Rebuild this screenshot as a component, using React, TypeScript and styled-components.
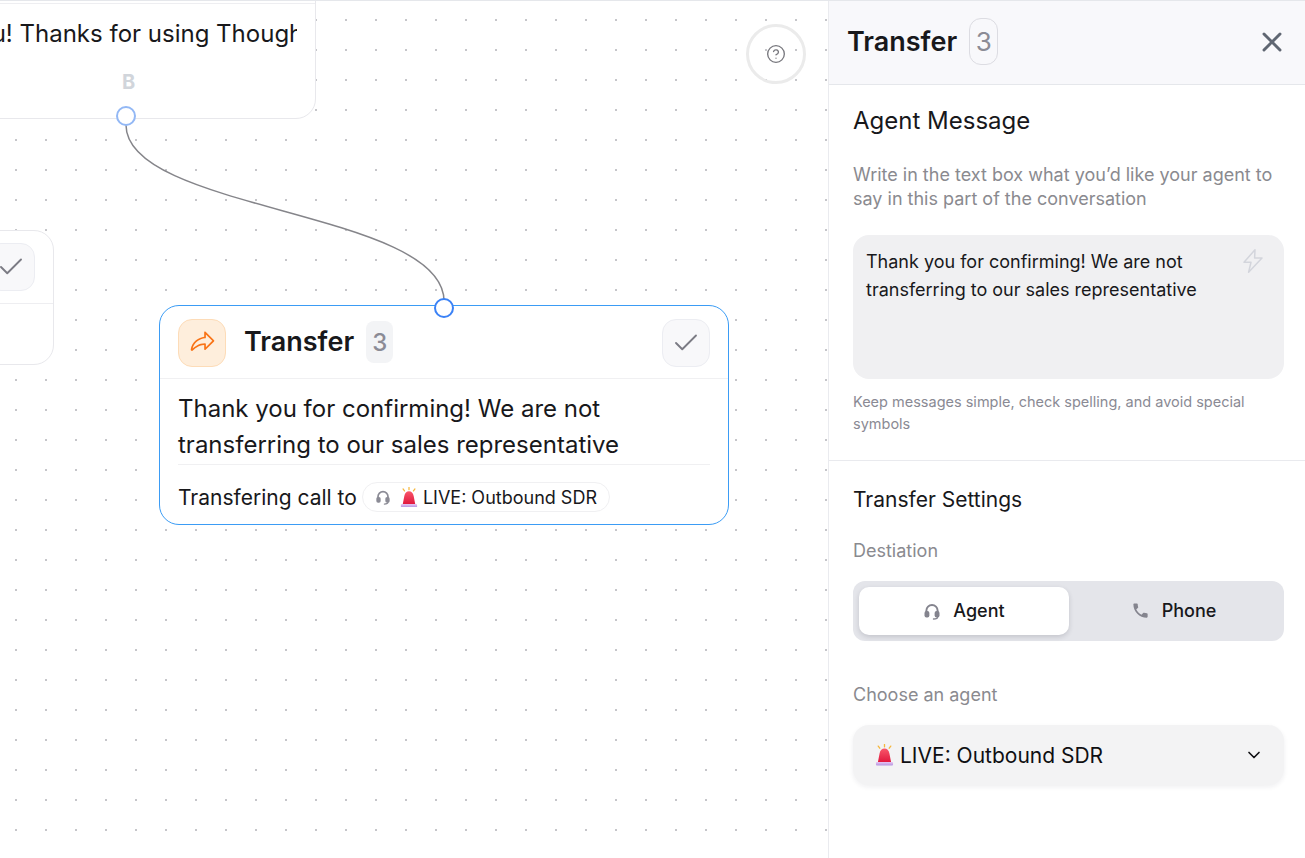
import React from "react";
import styled, { createGlobalStyle } from "styled-components";
import { Check, ChevronDown, CircleHelp, X } from "lucide-react";
import { MdPhone } from "react-icons/md";
import { PiShareFat } from "react-icons/pi";

const GlobalStyle = createGlobalStyle`
  html, body {
    margin: 0;
    padding: 0;
    background: #fff;
    overflow: hidden;
  }
  * {
    box-sizing: border-box;
  }
  body {
    font-family: Inter, "Liberation Sans", sans-serif;
    color: #18181b;
  }
`;

const Page = styled.div`
  display: flex;
  width: 1305px;
  height: 858px;
  border-top: 1px solid #e5e7eb;
`;

const Canvas = styled.div`
  position: relative;
  flex: 0 0 828px;
  height: 857px;
  overflow: hidden;
  background-image: radial-gradient(circle, #c6c6ca 1px, transparent 1.1px);
  background-size: 30px 30px;
  background-position: 1px 4px;
`;

const Edge = styled.svg`
  position: absolute;
  left: 0;
  top: 0;
  width: 828px;
  height: 857px;
  pointer-events: none;
`;

const Node = styled.div<{ $active?: boolean }>`
  position: absolute;
  background: #fff;
  border: ${(p) => (p.$active ? "1.5px solid #3b9cf5" : "1px solid #e8e8ec")};
  border-radius: 20px;
`;

const TopNode = styled(Node)`
  left: -200px;
  top: -60px;
  width: 516px;
  height: 178px;
`;

const TopDivider = styled.div`
  margin-top: 61px;
  height: 1px;
  background: #eeeef1;
`;

const ClippedMessage = styled.div`
  margin: 12px 18px 0 0;
  font-size: 24px;
  line-height: 36px;
  white-space: nowrap;
  overflow: hidden;
  text-indent: 86px;
`;

const BranchLetter = styled.div`
  position: absolute;
  left: 321px;
  top: 128px;
  font-size: 20px;
  font-weight: 700;
  color: #d1d5db;
`;

const Handle = styled.div<{ $strong?: boolean }>`
  position: absolute;
  width: 20px;
  height: 20px;
  border-radius: 50%;
  background: #fff;
  border: 2px solid ${(p) => (p.$strong ? "#3b82f6" : "#93b8f5")};
`;

const TopHandle = styled(Handle)`
  left: 116px;
  top: 105px;
`;

const CardHandle = styled(Handle)`
  left: 434px;
  top: 297px;
`;

const SideNode = styled(Node)`
  left: -200px;
  top: 229px;
  width: 254px;
  height: 135px;
`;

const SideHeader = styled.div`
  display: flex;
  justify-content: flex-end;
  align-items: center;
  height: 73px;
  padding-right: 18px;
  border-bottom: 1px solid #eeeef1;
`;

const CheckButton = styled.div`
  display: flex;
  align-items: center;
  justify-content: center;
  width: 48px;
  height: 48px;
  border-radius: 14px;
  background: #f8f8fa;
  border: 1px solid #ecedf2;
  color: #7b7b84;
`;

const TransferNode = styled(Node)`
  left: 159px;
  top: 304px;
  width: 570px;
  height: 220px;
`;

const NodeHeader = styled.div`
  display: flex;
  align-items: center;
  height: 73px;
  padding: 1px 18px 0;
  border-bottom: 1.5px solid #f0f0f2;
`;

const NodeIcon = styled.div`
  display: flex;
  align-items: center;
  justify-content: center;
  width: 48px;
  height: 48px;
  border-radius: 14px;
  background: #feeedc;
  border: 1px solid #fddcb8;
  color: #f97316;
`;

const NodeTitle = styled.div`
  margin-left: 18px;
  padding-bottom: 3px;
  font-size: 27px;
  font-weight: 600;
`;

const NodeBadge = styled.div`
  display: flex;
  align-items: center;
  justify-content: center;
  width: 27px;
  height: 42px;
  margin: 0 0 1px 12px;
  border-radius: 8px;
  background: #f3f4f6;
  color: #8b8b95;
  font-size: 24px;
  font-weight: 500;
`;

const Spacer = styled.div`
  flex: 1;
`;

const NodeBody = styled.div`
  padding: 12px 18px 0;
`;

const NodeMessage = styled.div`
  padding-bottom: 1px;
  font-size: 24px;
  line-height: 36px;
  border-bottom: 1px solid #f0f0f2;
`;

const NodeFooter = styled.div`
  display: flex;
  align-items: center;
  gap: 5px;
  margin-top: 17px;
  font-size: 21px;
`;

const Chip = styled.div`
  display: flex;
  align-items: center;
  height: 30px;
  padding: 0 12px;
  border: 1px solid #f0f0f2;
  border-radius: 15px;
  font-size: 18px;
  color: #18181b;
`;

const ChipIcon = styled.span`
  display: flex;
  margin-right: 9px;
  color: #8b8b95;
`;

const HelpButton = styled.div`
  position: absolute;
  left: 746px;
  top: 23px;
  display: flex;
  align-items: center;
  justify-content: center;
  width: 60px;
  height: 60px;
  border-radius: 50%;
  border: 3px solid #ebebeb;
  color: #77777d;
`;

const Panel = styled.aside`
  flex: 1;
  display: flex;
  flex-direction: column;
  border-left: 1px solid #eaebef;
`;

const PanelHeader = styled.header`
  display: flex;
  align-items: center;
  height: 84px;
  padding: 0 18px 2px;
  background: #f8f8fb;
  border-bottom: 1px solid #e5e7eb;
`;

const PanelTitle = styled.h1`
  margin: 0;
  font-size: 27px;
  font-weight: 600;
`;

const PanelBadge = styled.div`
  display: flex;
  align-items: center;
  justify-content: center;
  width: 29px;
  height: 47px;
  margin-left: 12px;
  border: 1px solid #dcdce2;
  border-radius: 12px;
  color: #8b8b95;
  font-size: 26px;
`;

const CloseButton = styled.div`
  display: flex;
  margin-right: -1px;
  color: #5f6672;
`;

const MessageSection = styled.section`
  padding: 20px 21px 25px 24px;
  border-bottom: 1px solid #e9eaee;
`;

const SectionTitle = styled.h2`
  margin: 0;
  font-size: 24px;
  line-height: 32px;
  font-weight: 400;
`;

const Description = styled.p`
  margin: 26px 0 0;
  font-size: 18px;
  line-height: 24px;
  color: #8a8a8f;
`;

const MessageBox = styled.div`
  position: relative;
  height: 144px;
  margin-top: 24px;
  padding: 13px 50px 0 13px;
  border-radius: 16px;
  background: #f0f0f2;
  font-size: 18px;
  line-height: 28px;
`;

const BoltSlot = styled.svg`
  position: absolute;
  top: 14px;
  right: 21px;
  width: 20px;
  height: 24px;
  fill: none;
  stroke: #d3d5dc;
  stroke-width: 1.5;
  stroke-linejoin: round;
`;

const Hint = styled.p`
  margin: 12px 0 0;
  font-size: 14.5px;
  line-height: 22px;
  color: #8a8a94;
`;

const SettingsSection = styled.section`
  padding: 26px 21px 0 24px;
`;

const SettingsTitle = styled.h2`
  margin: 0;
  font-size: 21px;
  line-height: 26px;
  font-weight: 400;
`;

const FieldLabel = styled.div`
  margin-top: 25px;
  font-size: 18px;
  line-height: 26px;
  color: #8a8a8f;
`;

const Toggle = styled.div`
  display: grid;
  grid-template-columns: 210px 1fr;
  height: 60px;
  margin-top: 17px;
  padding: 6px;
  border-radius: 12px;
  background: #e4e5ea;
`;

const ToggleOption = styled.div<{ $active?: boolean }>`
  display: flex;
  align-items: center;
  justify-content: center;
  gap: 12px;
  padding-bottom: 1px;
  border-radius: 10px;
  font-size: 18px;
  font-weight: 500;
  background: ${(p) => (p.$active ? "#fff" : "transparent")};
  box-shadow: ${(p) => (p.$active ? "0 2px 5px rgba(30, 30, 50, 0.16)" : "none")};
  svg {
    color: #84848e;
  }
`;

const ChooseLabel = styled(FieldLabel)`
  margin-top: 41px;
`;

const Select = styled.div`
  display: flex;
  align-items: center;
  justify-content: space-between;
  height: 60px;
  margin-top: 17px;
  padding: 0 20px 0 22px;
  border-radius: 16px;
  background: #f3f3f4;
  box-shadow: 0 2px 5px rgba(30, 30, 50, 0.07);
  font-size: 21px;
  color: #0f0f12;
`;

const SelectValue = styled.div`
  display: flex;
  align-items: center;
  gap: 6px;
`;

const Headset = ({ size }: { size: number }) => (
  <svg width={size} height={size} viewBox="0 0 24 24" aria-hidden="true">
    <path d="M4.5 14v-2.5a7.5 7.5 0 0 1 15 0V14" fill="none" stroke="currentColor" strokeWidth="2.6" />
    <rect x="2" y="12" width="6.5" height="8.5" rx="2.6" fill="currentColor" />
    <rect x="15.5" y="12" width="6.5" height="8.5" rx="2.6" fill="currentColor" />
    <path d="M19.5 20c0 1.8-2.2 2.6-5.5 2.6" fill="none" stroke="currentColor" strokeWidth="1.8" strokeLinecap="round" />
  </svg>
);

const Siren = ({ size }: { size: number }) => (
  <svg width={size} height={size * 1.15} viewBox="0 0 20 23" aria-hidden="true">
    <defs>
      <linearGradient id="dome" x1="0" y1="0" x2="0" y2="1">
        <stop offset="0" stopColor="#f8566a" />
        <stop offset="1" stopColor="#e0163c" />
      </linearGradient>
      <linearGradient id="base" x1="0" y1="0" x2="0" y2="1">
        <stop offset="0" stopColor="#e6c4f2" />
        <stop offset="1" stopColor="#b596e0" />
      </linearGradient>
    </defs>
    <path d="M3 19.5 L4.8 10 C5.4 6.6 7.4 4.8 10 4.8 C12.6 4.8 14.6 6.6 15.2 10 L17 19.5 Z" fill="url(#dome)" />
    <rect x="1" y="19" width="18" height="3.6" rx="1" fill="url(#base)" />
    <path
      d="M10 0.5 V3 M3.4 2.2 L5 4.4 M16.6 2.2 L15 4.4"
      stroke="#f6b73c"
      strokeWidth="1.4"
      strokeLinecap="round"
    />
  </svg>
);

const App = () => (
  <>
    <GlobalStyle />
    <Page>
      <Canvas>
        <TopNode>
          <TopDivider />
          <ClippedMessage>Thank you! Thanks for using Thoughtly today</ClippedMessage>
          <BranchLetter>B</BranchLetter>
        </TopNode>
        <SideNode>
          <SideHeader>
            <CheckButton>
              <Check size={30} strokeWidth={1.5} />
            </CheckButton>
          </SideHeader>
        </SideNode>
        <Edge viewBox="0 0 828 857">
          <path d="M126 124 C126 210 444 210 444 300" fill="none" stroke="#85858a" strokeWidth="1.5" />
        </Edge>
        <TopHandle />
        <TransferNode $active>
          <NodeHeader>
            <NodeIcon>
              <PiShareFat size={27} />
            </NodeIcon>
            <NodeTitle>Transfer</NodeTitle>
            <NodeBadge>3</NodeBadge>
            <Spacer />
            <CheckButton>
              <Check size={30} strokeWidth={1.5} />
            </CheckButton>
          </NodeHeader>
          <NodeBody>
            <NodeMessage>
              Thank you for confirming! We are not
              <br />
              transferring to our sales representative
            </NodeMessage>
            <NodeFooter>
              Transfering call to
              <Chip>
                <ChipIcon>
                  <Headset size={16} />
                </ChipIcon>
                <Siren size={18} />
                <span>&nbsp;LIVE: Outbound SDR</span>
              </Chip>
            </NodeFooter>
          </NodeBody>
        </TransferNode>
        <CardHandle $strong />
        <HelpButton>
          <CircleHelp size={20} strokeWidth={1.6} />
        </HelpButton>
      </Canvas>
      <Panel>
        <PanelHeader>
          <PanelTitle>Transfer</PanelTitle>
          <PanelBadge>3</PanelBadge>
          <Spacer />
          <CloseButton>
            <X size={32} strokeWidth={2.2} />
          </CloseButton>
        </PanelHeader>
        <MessageSection>
          <SectionTitle>Agent Message</SectionTitle>
          <Description>
            Write in the text box what you’d like your agent to say in this part of the conversation
          </Description>
          <MessageBox>
            Thank you for confirming! We are not transferring to our sales representative
            <BoltSlot viewBox="0 0 20 24">
              <path d="M12 .8 1 13.2h7L5.6 23.2 19 9h-7.4Z" />
            </BoltSlot>
          </MessageBox>
          <Hint>Keep messages simple, check spelling, and avoid special symbols</Hint>
        </MessageSection>
        <SettingsSection>
          <SettingsTitle>Transfer Settings</SettingsTitle>
          <FieldLabel>Destiation</FieldLabel>
          <Toggle>
            <ToggleOption $active>
              <Headset size={18} />
              Agent
            </ToggleOption>
            <ToggleOption>
              <MdPhone size={19} />
              Phone
            </ToggleOption>
          </Toggle>
          <ChooseLabel>Choose an agent</ChooseLabel>
          <Select>
            <SelectValue>
              <Siren size={19} />
              LIVE: Outbound SDR
            </SelectValue>
            <ChevronDown size={20} strokeWidth={2} />
          </Select>
        </SettingsSection>
      </Panel>
    </Page>
  </>
);

export default App;
